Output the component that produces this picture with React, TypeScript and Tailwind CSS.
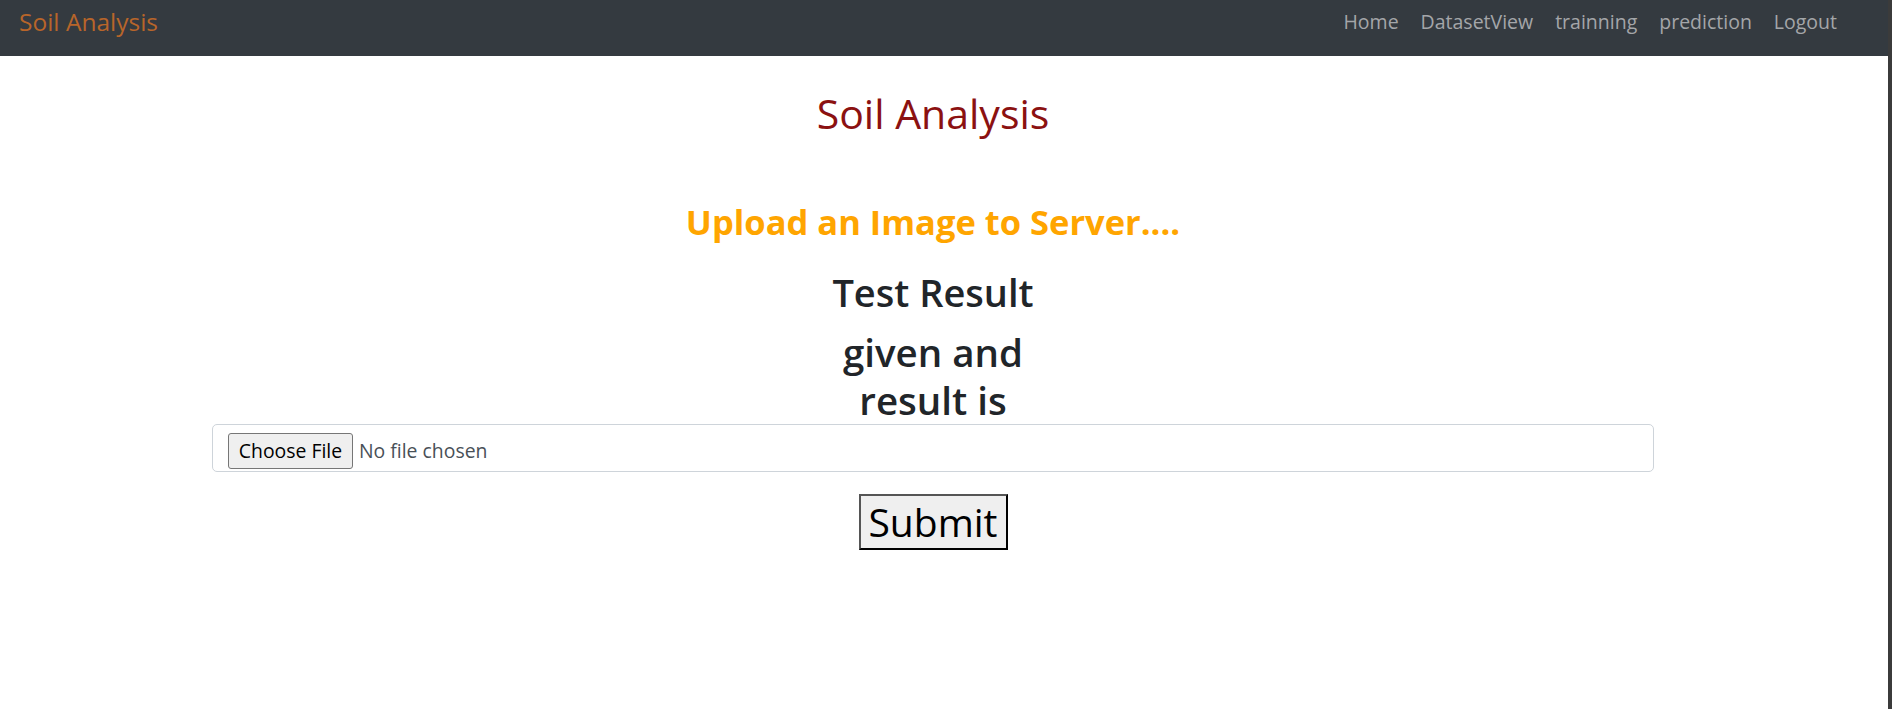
import React from "react";

const links = ["Home", "DatasetView", "trainning", "prediction", "Logout"];

export default function App() {
  return (
    <div className="flex min-h-[709px] w-full bg-white font-['Open_Sans',sans-serif]">
      <div className="min-w-0 flex-1">
        <nav className="flex h-[56px] items-center justify-between bg-[#343a40] pl-[19px] pr-[40px]">
          <a className="pb-[13px] text-[24.5px] leading-[30px] text-[#b8652a]">Soil Analysis</a>
          <ul className="flex pb-[12px]">
            {links.map((l) => (
              <li key={l}>
                <a className="block px-[11px] text-[19.5px] leading-[26px] text-[#a4a6a9]">{l}</a>
              </li>
            ))}
          </ul>
        </nav>
        <main className="ml-[212px] flex w-[1442px] flex-col items-center text-center">
          <h2 className="mt-[33px] text-[41px] leading-[48px] font-medium text-[#8b1111]">Soil Analysis</h2>
          <h3 className="mt-[65px] text-[34.5px] leading-[40px] font-bold text-[#ffa500]">
            Upload an Image to Server....
          </h3>
          <h2 className="mt-[26px] text-[38px] leading-[48px] font-semibold text-[#212529]">Test Result</h2>
          <h2 className="mt-[12px] text-[38.5px] leading-[48px] font-semibold text-[#212529]">
            given and
            <br />
            result is
          </h2>
          <label className="flex h-[48px] w-full items-start gap-[6px] rounded-[5px] border border-[#ced4da] bg-white pl-[15px] pt-[8px]">
            <span className="flex h-[36px] w-[125px] items-center justify-center rounded-[3px] border border-[#767676] bg-[#efefef] text-[19.4px] text-black">
              Choose File
            </span>
            <span className="mt-[4px] text-[19.4px] leading-[28px] text-[#495057]">No file chosen</span>
          </label>
          <button className="mt-[22px] h-[56px] w-[149px] border-2 border-t-[#555] border-l-[#555] border-r-black border-b-black bg-[#efefef] text-[39px] leading-[52px] text-black">
            Submit
          </button>
        </main>
      </div>
      <div className="w-[4px] shrink-0 bg-[#3b3b3b]" />
    </div>
  );
}
